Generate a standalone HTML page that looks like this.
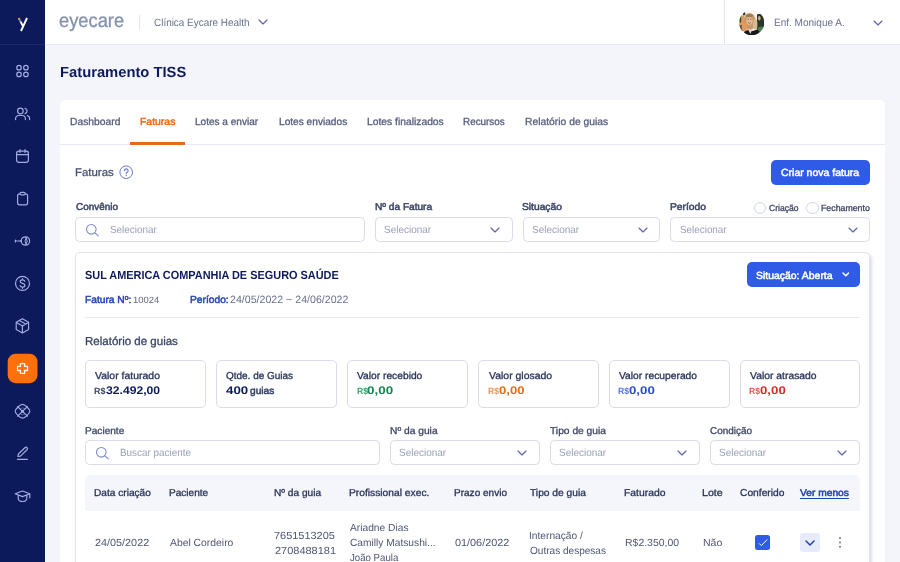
<!DOCTYPE html>
<html lang="pt-BR">
<head>
<meta charset="utf-8">
<title>Faturamento TISS</title>
<style>
*{box-sizing:border-box;margin:0;padding:0}
html,body{width:900px;height:562px;overflow:hidden;background:#f4f5fb;font-family:"Liberation Sans",sans-serif;color:#525c7a;font-size:10.2px}
.abs{position:absolute}
.t{position:absolute;white-space:nowrap;line-height:14px;height:14px;transform-origin:0 50%;text-rendering:geometricPrecision}
#side{position:absolute;left:0;top:0;width:45px;height:562px;background:#0c1a5c}
#side .sep{position:absolute;left:0;top:43.6px;width:45px;height:1.4px;background:#1d2b69}
#top{position:absolute;left:45px;top:0;width:855px;height:45px;background:#fff;border-bottom:1px solid #e8ebf6}
#main{position:absolute;left:60px;top:100px;width:825px;height:470px;background:#fff;border-radius:5px 5px 0 0}
.inp{position:absolute;height:25px;border:1px solid #d8dcee;border-radius:4.5px;background:#fff}
.btn{position:absolute;background:#2f5be7;border-radius:5px}
.stat{position:absolute;top:360px;width:121px;height:47.7px;border:1px solid #d8dcee;border-radius:5px;background:#fff}
.chev{position:absolute;width:10px;height:6px;fill:none;stroke:#5a68aa;stroke-width:1.15;stroke-linecap:round;stroke-linejoin:round}
</style>
</head>
<body>
<!-- sidebar -->
<div id="side">
  <div class="sep"></div>
<svg class="abs" style="left:0;top:0;width:45px;height:562px" viewBox="0 0 45 562" fill="none" stroke="#a2ace0" stroke-width="1.2" stroke-linecap="round" stroke-linejoin="round">
  <!-- logo -->
  <g stroke-width="1.9" stroke-linecap="butt">
    <path d="M27 18L21 31" stroke="#fff"/>
    <path d="M20.4 21.4L22.9 26" stroke="#fff"/>
    <path d="M19.6 19.9L20.4 21.4" stroke="#4aa3e0"/>
    <path d="M18.6 18L19.6 19.9" stroke="#f59a3c"/>
  </g>
  <!-- grid -->
  <circle cx="19" cy="67.700" r="2.250"/><circle cx="25.900" cy="67.700" r="2.250"/><circle cx="19" cy="74.450" r="2.250"/><circle cx="25.900" cy="74.450" r="2.250"/>
  <!-- users -->
  <circle cx="20.4" cy="111" r="2.8"/>
  <path d="M15.6 119.6v-1.2a2.9 2.9 0 0 1 2.9-2.9h4a2.9 2.9 0 0 1 2.9 2.9v1.2"/>
  <path d="M25 108.3a2.8 2.8 0 0 1 0 5.4"/>
  <path d="M29.6 119.6v-1.2a2.9 2.9 0 0 0-2.2-2.8"/>
  <!-- calendar -->
  <rect x="16.6" y="151.2" width="11.8" height="11.1" rx="2.2"/>
  <path d="M16.6 154.7h11.8M20 149.6v2.8M25 149.6v2.8"/>
  <!-- clipboard -->
  <rect x="17.6" y="193.8" width="10" height="11" rx="2"/>
  <rect x="20" y="192.3" width="5.2" height="2.6" rx="1.2" fill="#0c1a5c"/>
  <!-- lens -->
  <circle cx="25.4" cy="241" r="4.2"/>
  <path d="M15.4 241h5.6M15.4 240v2" />
  <path d="M26.100 237.300a7 7 0 0 1 0 7.400M26.100 237.300a7 7 0 0 0 0 7.400" stroke-width="1"/><circle cx="20.900" cy="241" r=".9" fill="#a2ace0" stroke="none"/>
  <!-- dollar -->
  <circle cx="22.5" cy="283.4" r="7"/>
  <path d="M24.8 281.2c-.3-.9-1.200-1.400-2.300-1.400-1.300 0-2.300.7-2.300 1.800 0 2.400 4.700 1.100 4.700 3.600 0 1.100-1 1.900-2.400 1.900-1.200 0-2.100-.6-2.400-1.500M22.500 278.600v1.200M22.500 287.100v1.200"/>
  <!-- box -->
  <path d="M22.400 318.700l6.200 3.600v7.100l-6.200 3.600-6.200-3.600v-7.100zM16.400 322.400l6 3.500 6-3.500M22.400 325.900v7M19.300 320.500l6.200 3.600"/>
  <!-- active -->
  <rect x="7.700" y="353.700" width="29.800" height="29.500" rx="8" fill="#ff6f0a" stroke="none"/>
  <path d="M20.400 363.600h4.200v2.800h2.900v4.100h-2.900v2.800h-4.200v-2.800h-2.900v-4.100h2.900z" stroke="#fff3e4" stroke-width="1.300" stroke-linejoin="miter"/>
  <!-- ball -->
  <path d="M22.500 404.400c2.200 0 7.300 4.700 7.300 6.900s-5.100 6.900-7.300 6.900-7.300-4.700-7.300-6.900 5.100-6.900 7.300-6.900z"/>
  <path d="M17.600 406.600l9.800 9.500M27.400 406.600l-9.800 9.500" />
  <circle cx="22.500" cy="411.300" r="1.500" fill="#a2ace0" stroke="none"/>
  <path d="M20.300 408.600a3.500 3.500 0 0 1 4.400 0M20.300 414a3.500 3.500 0 0 0 4.400 0" stroke-width=".8" opacity=".6"/>
  <!-- pencil -->
  <path d="M17.900 456.500l.5-2.500 6.500-6.300a1.500 1.500 0 0 1 2.100 0 1.500 1.500 0 0 1 0 2.100l-6.500 6.300zM17.400 459.300h10"/>
  <!-- cap -->
  <path d="M22.500 491l7.300 2.800-7.300 2.800-7.300-2.800zM29.800 493.800v4M18.200 495.200v3.300c0 1.700 2 3 4.300 3s4.300-1.300 4.300-3v-3.300"/>
</svg>
</div>
<!-- topbar -->
<div id="top"></div>
<div class="abs" style="left:139px;top:14.5px;width:1px;height:15px;background:#e3e6f4"></div>
<svg class="chev" style="left:258.3px;top:19.3px" viewBox="0 0 10 6"><path d="M1 1l4 4 4-4"/></svg>
<div class="abs" style="left:724px;top:0;width:1px;height:44px;background:#e3e6f4"></div>
<svg class="abs" style="left:739px;top:10px;width:25.4px;height:25.4px" viewBox="0 0 25.4 25.4">
<defs><clipPath id="avc"><circle cx="12.7" cy="12.7" r="12.6"/></clipPath><filter id="avb" x="-20%" y="-20%" width="140%" height="140%"><feGaussianBlur stdDeviation="0.5"/></filter></defs>
<g clip-path="url(#avc)"><g filter="url(#avb)">
<rect x="-3" y="-3" width="32" height="32" fill="#f7f5f1"/>
<path d="M18 4.500c3-1 6 0 8 2v16h-8z" fill="#27382c"/>
<ellipse cx="20.300" cy="8.300" rx="1.300" ry="2.200" fill="#e8a774"/>
<ellipse cx="22" cy="20" rx="3.500" ry="3.500" fill="#4f7d48"/>
<rect x="-1" y="5.500" width="6" height="11" fill="#e8985a"/>
<rect x="0.600" y="4.500" width="1.600" height="8" fill="#4a3d2c"/>
<ellipse cx="5" cy="3.800" rx="1.400" ry="1.800" fill="#2f3a2a"/>
<rect x="-1" y="15" width="5" height="6" fill="#6a5238"/>
<ellipse cx="10.600" cy="11.500" rx="6.300" ry="8.600" fill="#c79c6c"/>
<ellipse cx="5.500" cy="17" rx="2.800" ry="4.500" fill="#dc9a5c"/>
<ellipse cx="16.200" cy="14.500" rx="2.300" ry="5" fill="#d8b890"/>
<ellipse cx="10.400" cy="10.800" rx="3" ry="4.100" fill="#e6b998"/>
<ellipse cx="10.400" cy="5.600" rx="3.600" ry="1.700" fill="#9c7852"/>
<path d="M8.600 9.200h1.200M11.200 9.200h1.200" stroke="#5a4030" stroke-width=".8"/>
<path d="M9 12.600q1.400 1 2.800 0" stroke="#a05a4a" stroke-width=".8" fill="none"/>
<path d="M2 27L5.500 21.500 9 20 14 21 18 19.500 21 22 22 27z" fill="#17171c"/>
<path d="M9.300 19.500l2 4.500 2-4.500z" fill="#ecd9cc"/>
</g></g></svg>
<svg class="chev" style="left:872.6px;top:19.5px" viewBox="0 0 10 6"><path d="M1 1l4 4 4-4"/></svg>

<div id="main"></div>
<!-- tabs -->
<div class="abs" style="left:60px;top:144px;width:825px;height:1px;background:#e6e9f4"></div>
<div class="abs" style="left:130px;top:142px;width:55px;height:3px;background:#e26b21"></div>
<div class="btn" style="left:771px;top:160px;width:99px;height:25px"></div>
<!-- help icon -->
<svg class="abs" style="left:119px;top:165px;width:14.4px;height:14.4px" viewBox="0 0 14.4 14.4"><circle cx="7.2" cy="7.2" r="6.3" fill="none" stroke="#6578c4" stroke-width="1"/><path d="M5.400 5.700a1.850 1.850 0 1 1 2.700 1.650c-.6.300-.9.650-.9 1.250" fill="none" stroke="#6578c4" stroke-width="1.100" stroke-linecap="round"/><circle cx="7.200" cy="10.400" r=".65" fill="#6578c4"/></svg>

<!-- filter row 1 -->
<div class="inp" style="left:75px;top:217px;width:290px"></div>
<div class="inp" style="left:375px;top:217px;width:138px"></div>
<div class="inp" style="left:522.500px;top:217px;width:137.500px"></div>
<div class="inp" style="left:670px;top:217px;width:200px"></div>
<svg class="abs srch" style="left:85px;top:222.500px;width:15px;height:15px" viewBox="0 0 15 15"><circle cx="6.300" cy="6.300" r="4.800" fill="none" stroke="#7a8bd0" stroke-width="1.100"/><path d="M9.900 9.900l3.400 2.900" stroke="#7a8bd0" stroke-width="1.100" stroke-linecap="round"/></svg>
<svg class="chev" style="left:490px;top:226.700px" viewBox="0 0 10 6"><path d="M1 1l4 4 4-4"/></svg>
<svg class="chev" style="left:638.300px;top:226.700px" viewBox="0 0 10 6"><path d="M1 1l4 4 4-4"/></svg>
<svg class="chev" style="left:847.700px;top:226.700px" viewBox="0 0 10 6"><path d="M1 1l4 4 4-4"/></svg>
<div class="abs" style="left:753.600px;top:201.600px;width:12.800px;height:12.800px;border:1px solid #cfd5ec;border-radius:50%;background:#fff"></div>
<div class="abs" style="left:806.200px;top:201.600px;width:12.800px;height:12.800px;border:1px solid #cfd5ec;border-radius:50%;background:#fff"></div>

<!-- invoice card -->
<div class="abs" style="left:75px;top:252px;width:795px;height:330px;border:1px solid #dfe3f3;border-radius:5px;background:#fff;box-shadow:1.5px 2px 3px rgba(40,50,120,.16)"></div>
<div class="btn" style="left:746.500px;top:262.300px;width:113.500px;height:24.700px"></div>
<svg class="chev" style="left:841.600px;top:272.400px;width:7.600px;height:4.800px;stroke:#fff;stroke-width:1.500" viewBox="0 0 7.6 4.8"><path d="M1 1l2.800 2.800 2.800-2.800"/></svg>
<div class="abs" style="left:85px;top:317px;width:775px;height:1px;background:#e6e9f4"></div>

<div class="stat" style="left:85px"></div>
<div class="stat" style="left:216px"></div>
<div class="stat" style="left:347px"></div>
<div class="stat" style="left:478px"></div>
<div class="stat" style="left:609px"></div>
<div class="stat" style="left:739.500px;width:120.500px"></div>

<!-- filter row 2 -->
<div class="inp" style="left:85px;top:440px;width:294.500px"></div>
<div class="inp" style="left:390px;top:440px;width:149.500px"></div>
<div class="inp" style="left:550px;top:440px;width:149.500px"></div>
<div class="inp" style="left:710px;top:440px;width:149.500px"></div>
<svg class="abs srch" style="left:95.400px;top:446px;width:15px;height:15px" viewBox="0 0 15 15"><circle cx="6.300" cy="6.300" r="4.800" fill="none" stroke="#7a8bd0" stroke-width="1.100"/><path d="M9.900 9.900l3.400 2.900" stroke="#7a8bd0" stroke-width="1.100" stroke-linecap="round"/></svg>
<svg class="chev" style="left:517.300px;top:449.500px" viewBox="0 0 10 6"><path d="M1 1l4 4 4-4"/></svg>
<svg class="chev" style="left:677.300px;top:449.500px" viewBox="0 0 10 6"><path d="M1 1l4 4 4-4"/></svg>
<svg class="chev" style="left:837.300px;top:449.500px" viewBox="0 0 10 6"><path d="M1 1l4 4 4-4"/></svg>

<!-- table -->
<div class="abs" style="left:85px;top:474.700px;width:774.500px;height:36.500px;background:#f5f6fb;border-radius:5px 5px 0 0"></div>
<div class="abs" style="left:754.800px;top:534.800px;width:15.100px;height:15.100px;border-radius:2.500px;background:#2f5be7"></div>
<svg class="abs" style="left:754.800px;top:534.800px;width:15.100px;height:15.100px" viewBox="0 0 15.1 15.1"><path d="M4.400 8.700l1.900 1.900 5.600-5.800" fill="none" stroke="#fff" stroke-width="1" stroke-linecap="round" stroke-linejoin="round"/></svg>
<div class="abs" style="left:800px;top:532.800px;width:19.600px;height:19.600px;border-radius:3px;background:#e7ecfc"></div>
<svg class="chev" style="left:805px;top:539.500px;stroke:#2342ad;stroke-width:1.500" viewBox="0 0 10 6"><path d="M1 1l4 4 4-4"/></svg>
<div class="abs" style="left:839.100px;top:537.300px;width:2px;height:2px;border-radius:50%;background:#6a7391;box-shadow:0 4.400px 0 #6a7391,0 8.800px 0 #6a7391"></div>

<div class="t" style="left:59.38px;top:14px;font-size:19.6px;color:#8492ab;transform:scaleX(0.9342);-webkit-text-stroke:0.3px #8492ab">eyecare</div>
<div class="t" style="left:154.24px;top:16px;font-size:10.5px;color:#67718f;transform:scaleX(0.9461)">Clínica Eycare Health</div>
<div class="t" style="left:774.25px;top:16px;font-size:10.5px;color:#67718f;transform:scaleX(0.9547)">Enf. Monique A.</div>
<div class="t" style="left:59.92px;top:66px;font-size:14.7px;color:#0c1a5c;transform:scaleX(1.0046);font-weight:700">Faturamento TISS</div>
<div class="t" style="left:69.67px;top:116px;font-size:10.3px;color:#545d7c;transform:scaleX(1.0008);-webkit-text-stroke:0.3px #545d7c">Dashboard</div>
<div class="t" style="left:139.75px;top:116px;font-size:10.3px;color:#ea6c1f;transform:scaleX(1.0123);-webkit-text-stroke:0.5px #ea6c1f">Faturas</div>
<div class="t" style="left:194.89px;top:116px;font-size:10.3px;color:#545d7c;transform:scaleX(0.9759);-webkit-text-stroke:0.3px #545d7c">Lotes a enviar</div>
<div class="t" style="left:278.58px;top:116px;font-size:10.3px;color:#545d7c;transform:scaleX(0.9846);-webkit-text-stroke:0.3px #545d7c">Lotes enviados</div>
<div class="t" style="left:366.57px;top:116px;font-size:10.3px;color:#545d7c;transform:scaleX(1.0007);-webkit-text-stroke:0.3px #545d7c">Lotes finalizados</div>
<div class="t" style="left:463.41px;top:116px;font-size:10.3px;color:#545d7c;transform:scaleX(0.9595);-webkit-text-stroke:0.3px #545d7c">Recursos</div>
<div class="t" style="left:524.99px;top:116px;font-size:10.3px;color:#545d7c;transform:scaleX(1.0030);-webkit-text-stroke:0.3px #545d7c">Relatório de guias</div>
<div class="t" style="left:74.59px;top:166px;font-size:11.2px;color:#4a5373;transform:scaleX(1.0204);-webkit-text-stroke:0.3px #4a5373">Faturas</div>
<div class="t" style="left:781.22px;top:167px;font-size:10.4px;color:#ffffff;transform:scaleX(1.0085);-webkit-text-stroke:0.5px #ffffff">Criar nova fatura</div>
<div class="t" style="left:75.55px;top:201px;font-size:9.9px;color:#3c4566;transform:scaleX(1.0058);-webkit-text-stroke:0.5px #3c4566">Convênio</div>
<div class="t" style="left:375.17px;top:201px;font-size:9.9px;color:#3c4566;transform:scaleX(1.0246);-webkit-text-stroke:0.5px #3c4566">Nº da Fatura</div>
<div class="t" style="left:522.35px;top:201px;font-size:9.9px;color:#3c4566;transform:scaleX(1.0379);-webkit-text-stroke:0.5px #3c4566">Situação</div>
<div class="t" style="left:669.79px;top:201px;font-size:9.9px;color:#3c4566;transform:scaleX(1.0412);-webkit-text-stroke:0.5px #3c4566">Período</div>
<div class="t" style="left:768.55px;top:201px;font-size:8.9px;color:#3c4566;transform:scaleX(0.9631);-webkit-text-stroke:0.3px #3c4566">Criação</div>
<div class="t" style="left:820.92px;top:201px;font-size:8.9px;color:#3c4566;transform:scaleX(0.9892);-webkit-text-stroke:0.3px #3c4566">Fechamento</div>
<div class="t" style="left:109.72px;top:224px;font-size:10.4px;color:#98a1ba;transform:scaleX(0.9538)">Selecionar</div>
<div class="t" style="left:384.42px;top:224px;font-size:10.4px;color:#98a1ba;transform:scaleX(0.9600)">Selecionar</div>
<div class="t" style="left:531.72px;top:224px;font-size:10.4px;color:#98a1ba;transform:scaleX(0.9600)">Selecionar</div>
<div class="t" style="left:679.72px;top:224px;font-size:10.4px;color:#98a1ba;transform:scaleX(0.9497)">Selecionar</div>
<div class="t" style="left:84.97px;top:268px;font-size:11.8px;color:#0c1a5c;transform:scaleX(0.9255);font-weight:700">SUL AMERICA COMPANHIA DE SEGURO SAÚDE</div>
<div class="t" style="left:756.45px;top:270px;font-size:10.4px;color:#ffffff;transform:scaleX(1.0043);-webkit-text-stroke:0.5px #ffffff">Situação: Aberta</div>
<div class="t" style="left:85.27px;top:294px;font-size:10.2px;color:#2647b5;transform:scaleX(1.0021);-webkit-text-stroke:0.5px #2647b5">Fatura Nº:</div>
<div class="t" style="left:133.45px;top:293px;font-size:9px;color:#5f6780;transform:scaleX(1.0487)">10024</div>
<div class="t" style="left:189.97px;top:294px;font-size:10.2px;color:#2647b5;transform:scaleX(1.0047);-webkit-text-stroke:0.5px #2647b5">Período:</div>
<div class="t" style="left:230.44px;top:293px;font-size:10.6px;color:#67718f;transform:scaleX(1.0020)">24/05/2022 ~ 24/06/2022</div>
<div class="t" style="left:84.68px;top:335px;font-size:11.6px;color:#3a4465;transform:scaleX(0.9937);-webkit-text-stroke:0.3px #3a4465">Relatório de guias</div>
<div class="t" style="left:95.25px;top:370px;font-size:10.1px;color:#27325a;transform:scaleX(1.0371);-webkit-text-stroke:0.3px #27325a">Valor faturado</div>
<div class="t" style="left:94.49px;top:384px;font-size:9px;color:#3a4568;transform:scaleX(0.9873);font-weight:700">R$</div>
<div class="t" style="left:105.74px;top:384px;font-size:11px;color:#0c1a5c;transform:scaleX(1.1062);font-weight:700">32.492,00</div>
<div class="t" style="left:226.11px;top:370px;font-size:10.1px;color:#27325a;transform:scaleX(0.9878);-webkit-text-stroke:0.3px #27325a">Qtde. de Guias</div>
<div class="t" style="left:226.12px;top:384px;font-size:11px;color:#0c1a5c;transform:scaleX(1.2066);font-weight:700">400</div>
<div class="t" style="left:249.89px;top:385px;font-size:10px;color:#33406b;transform:scaleX(1.0152);-webkit-text-stroke:0.5px #33406b">guias</div>
<div class="t" style="left:357.25px;top:370px;font-size:10.1px;color:#27325a;transform:scaleX(1.0152);-webkit-text-stroke:0.3px #27325a">Valor recebido</div>
<div class="t" style="left:356.50px;top:384px;font-size:9px;color:#3f9e73;transform:scaleX(0.9596);font-weight:700">R$</div>
<div class="t" style="left:367.34px;top:384px;font-size:11px;color:#12874f;transform:scaleX(1.2188);font-weight:700">0,00</div>
<div class="t" style="left:488.65px;top:370px;font-size:10.1px;color:#27325a;transform:scaleX(1.0347);-webkit-text-stroke:0.3px #27325a">Valor glosado</div>
<div class="t" style="left:487.90px;top:384px;font-size:9px;color:#ee9550;transform:scaleX(0.9596);font-weight:700">R$</div>
<div class="t" style="left:498.76px;top:384px;font-size:11px;color:#e76b12;transform:scaleX(1.1898);font-weight:700">0,00</div>
<div class="t" style="left:619.05px;top:370px;font-size:10.1px;color:#27325a;transform:scaleX(1.0173);-webkit-text-stroke:0.3px #27325a">Valor recuperado</div>
<div class="t" style="left:618.30px;top:384px;font-size:9px;color:#5877da;transform:scaleX(0.9596);font-weight:700">R$</div>
<div class="t" style="left:629.15px;top:384px;font-size:11px;color:#2a4fcb;transform:scaleX(1.2043);font-weight:700">0,00</div>
<div class="t" style="left:749.55px;top:370px;font-size:10.1px;color:#27325a;transform:scaleX(1.0264);-webkit-text-stroke:0.3px #27325a">Valor atrasado</div>
<div class="t" style="left:748.80px;top:384px;font-size:9px;color:#e25a58;transform:scaleX(0.9596);font-weight:700">R$</div>
<div class="t" style="left:759.65px;top:384px;font-size:11px;color:#d92b2b;transform:scaleX(1.2043);font-weight:700">0,00</div>
<div class="t" style="left:85.15px;top:425px;font-size:9.9px;color:#3c4566;transform:scaleX(1.0221);-webkit-text-stroke:0.3px #3c4566">Paciente</div>
<div class="t" style="left:389.70px;top:425px;font-size:9.9px;color:#3c4566;transform:scaleX(1.0372);-webkit-text-stroke:0.3px #3c4566">Nº da guia</div>
<div class="t" style="left:550.43px;top:425px;font-size:9.9px;color:#3c4566;transform:scaleX(1.0367);-webkit-text-stroke:0.3px #3c4566">Tipo de guia</div>
<div class="t" style="left:710.37px;top:425px;font-size:9.9px;color:#3c4566;transform:scaleX(1.0067);-webkit-text-stroke:0.3px #3c4566">Condição</div>
<div class="t" style="left:119.96px;top:447px;font-size:10.4px;color:#98a1ba;transform:scaleX(0.9535)">Buscar paciente</div>
<div class="t" style="left:399.42px;top:447px;font-size:10.4px;color:#98a1ba;transform:scaleX(0.9600)">Selecionar</div>
<div class="t" style="left:559.42px;top:447px;font-size:10.4px;color:#98a1ba;transform:scaleX(0.9600)">Selecionar</div>
<div class="t" style="left:719.42px;top:447px;font-size:10.4px;color:#98a1ba;transform:scaleX(0.9600)">Selecionar</div>
<div class="t" style="left:94.39px;top:487px;font-size:10px;color:#27325a;transform:scaleX(1.0135);-webkit-text-stroke:0.3px #27325a">Data criação</div>
<div class="t" style="left:169.42px;top:487px;font-size:10px;color:#27325a;transform:scaleX(1.0070);-webkit-text-stroke:0.3px #27325a">Paciente</div>
<div class="t" style="left:274.40px;top:487px;font-size:10px;color:#27325a;transform:scaleX(1.0135);-webkit-text-stroke:0.3px #27325a">Nº da guia</div>
<div class="t" style="left:349.41px;top:487px;font-size:10px;color:#27325a;transform:scaleX(1.0255);-webkit-text-stroke:0.3px #27325a">Profissional exec.</div>
<div class="t" style="left:454.43px;top:487px;font-size:10px;color:#27325a;transform:scaleX(1.0032);-webkit-text-stroke:0.3px #27325a">Prazo envio</div>
<div class="t" style="left:530.12px;top:487px;font-size:10px;color:#27325a;transform:scaleX(1.0220);-webkit-text-stroke:0.3px #27325a">Tipo de guia</div>
<div class="t" style="left:624.41px;top:487px;font-size:10px;color:#27325a;transform:scaleX(1.0359);-webkit-text-stroke:0.3px #27325a">Faturado</div>
<div class="t" style="left:701.66px;top:487px;font-size:10px;color:#27325a;transform:scaleX(1.0659);-webkit-text-stroke:0.3px #27325a">Lote</div>
<div class="t" style="left:739.65px;top:487px;font-size:10px;color:#27325a;transform:scaleX(1.0252);-webkit-text-stroke:0.3px #27325a">Conferido</div>
<div class="t" style="left:800.23px;top:487px;font-size:10px;color:#2342ad;transform:scaleX(1.0225);-webkit-text-stroke:0.5px #2342ad;text-decoration:underline;text-underline-offset:1.5px">Ver menos</div>
<div class="t" style="left:95.03px;top:537px;font-size:10.3px;color:#4d5675;transform:scaleX(1.0514)">24/05/2022</div>
<div class="t" style="left:169.78px;top:537px;font-size:10.3px;color:#4d5675;transform:scaleX(1.0060)">Abel Cordeiro</div>
<div class="t" style="left:274.47px;top:530px;font-size:10.3px;color:#4d5675;transform:scaleX(1.0631)">7651513205</div>
<div class="t" style="left:274.52px;top:545px;font-size:10.3px;color:#4d5675;transform:scaleX(1.0649)">2708488181</div>
<div class="t" style="left:350.19px;top:522px;font-size:10.3px;color:#4d5675;transform:scaleX(0.9924)">Ariadne Dias</div>
<div class="t" style="left:349.93px;top:537px;font-size:10.3px;color:#4d5675;transform:scaleX(0.9904)">Camilly Matsushi...</div>
<div class="t" style="left:350.07px;top:552px;font-size:10.3px;color:#4d5675;transform:scaleX(0.9363)">João Paula</div>
<div class="t" style="left:455.11px;top:537px;font-size:10.3px;color:#4d5675;transform:scaleX(1.0536)">01/06/2022</div>
<div class="t" style="left:529.48px;top:530px;font-size:10.3px;color:#4d5675;transform:scaleX(0.9902)">Internação /</div>
<div class="t" style="left:529.89px;top:545px;font-size:10.3px;color:#4d5675;transform:scaleX(0.9762)">Outras despesas</div>
<div class="t" style="left:624.51px;top:537px;font-size:10.3px;color:#4d5675;transform:scaleX(1.0170)">R$2.350,00</div>
<div class="t" style="left:702.50px;top:537px;font-size:10.3px;color:#4d5675;transform:scaleX(1.0244)">Não</div>
</body>
</html>
